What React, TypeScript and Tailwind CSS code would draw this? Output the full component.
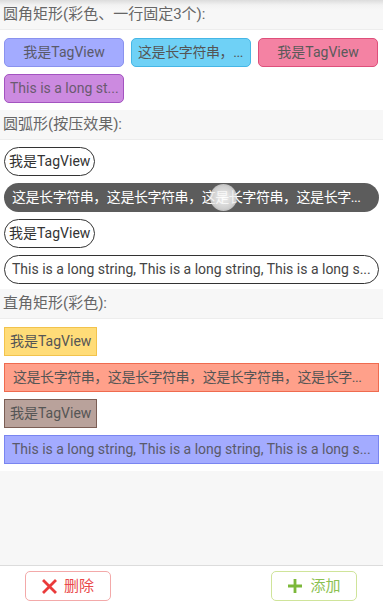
import React from "react";

const font = { fontFamily: 'Roboto, "Noto Sans CJK SC", sans-serif' };

function Header({ text, top }: { text: string; top?: boolean }) {
  return (
    <div
      className={
        "h-[30px] flex items-center px-[3px] text-[15px] text-[#666] border-b border-[#ededed] " +
        (top
          ? "bg-[linear-gradient(to_bottom,#dcdcdc_0px,#f2f2f2_5px,#f7f7f7_10px)]"
          : "bg-[#f7f7f7]")
      }
    >
      {text}
    </div>
  );
}

export default function App() {
  return (
    <div className="w-[383px] h-[606px] flex flex-col bg-[#f7f7f7] overflow-hidden" style={font}>
      <Header text="圆角矩形(彩色、一行固定3个):" top />
      <div className="bg-white pt-[8px] pb-[7px] px-[4px]">
        <div className="grid grid-cols-[120px_120px_120px] gap-[7px]">
          <div className="h-[29px] rounded-[5px] bg-[#a3abff] border border-[#8a92ee] flex items-center justify-center text-[14px] text-[#5a5a6a]">
            我是TagView
          </div>
          <div className="h-[29px] rounded-[5px] bg-[#6fd1f6] border border-[#45b6e6] flex items-center pl-[6px] text-[14px] tracking-[-0.4px] text-[#555] whitespace-nowrap overflow-hidden">
            这是长字符串，...
          </div>
          <div className="h-[29px] rounded-[5px] bg-[#f482a3] border border-[#de4f7b] flex items-center justify-center text-[14px] text-[#5a5a5a]">
            我是TagView
          </div>
          <div className="h-[29px] rounded-[5px] bg-[#cc8ae0] border border-[#a353c0] flex items-center px-[5px] text-[14px] text-[#6a5a70] whitespace-nowrap overflow-hidden">
            This is a long st...
          </div>
        </div>
      </div>
      <Header text="圆弧形(按压效果):" />
      <div className="bg-white pt-[7px] pb-[5px] px-[4px] flex flex-col gap-[7px]">
        <div className="self-start h-[29px] rounded-full border border-[#333] flex items-center px-[4px] text-[14px] text-[#333]">
          我是TagView
        </div>
        <div className="relative h-[29px] rounded-full bg-[#5c5c5c] flex items-center px-[8px] text-[14px] tracking-[-0.45px] text-white whitespace-nowrap overflow-hidden">
          这是长字符串，这是长字符串，这是长字符串，这是长字...
          <div className="absolute left-[206px] top-[1px] w-[27px] h-[27px] rounded-full bg-[radial-gradient(circle,rgba(255,255,255,0.9)_0%,rgba(235,235,235,0.8)_60%,rgba(255,255,255,0.3)_100%)]" />
        </div>
        <div className="self-start h-[29px] rounded-full border border-[#333] flex items-center px-[4px] text-[14px] text-[#333]">
          我是TagView
        </div>
        <div className="h-[29px] rounded-full border border-[#333] flex items-center px-[7px] text-[14px] text-[#444] whitespace-nowrap overflow-hidden">
          This is a long string, This is a long string, This is a long s...
        </div>
      </div>
      <Header text="直角矩形(彩色):" />
      <div className="bg-white pt-[8px] pb-[7px] px-[4px] flex flex-col gap-[7px]">
        <div className="self-start h-[29px] bg-[#ffdc78] border border-[#f2c34c] flex items-center px-[5px] text-[14px] text-[#555]">
          我是TagView
        </div>
        <div className="h-[29px] bg-[#ffa08a] border border-[#ef6b4f] flex items-center px-[8px] text-[14px] tracking-[-0.45px] text-[#555] whitespace-nowrap overflow-hidden">
          这是长字符串，这是长字符串，这是长字符串，这是长字...
        </div>
        <div className="self-start h-[29px] bg-[#b9a29b] border border-[#7b5e55] flex items-center px-[5px] text-[14px] text-[#555]">
          我是TagView
        </div>
        <div className="h-[29px] bg-[#a3abff] border border-[#7985f0] flex items-center px-[7px] text-[14px] text-[#5a5a6a] whitespace-nowrap overflow-hidden">
          This is a long string, This is a long string, This is a long s...
        </div>
      </div>
      <div className="flex-1 bg-[#f7f7f7]" />
      <div className="h-[41px] bg-white border-t border-[#dcdcdc] flex items-center justify-between pl-[25px] pr-[26px]">
        <div className="w-[86px] h-[30px] rounded-[5px] border border-[#f3a9a9] flex items-center justify-center gap-[7px] text-[15px] text-[#ea4a4a]">
          <svg width="15" height="15" viewBox="0 0 15 15">
            <path d="M2 2 L13 13 M13 2 L2 13" stroke="#ea3b3b" strokeWidth="2.8" strokeLinecap="square" />
          </svg>
          <span>删除</span>
        </div>
        <div className="w-[86px] h-[30px] rounded-[5px] border border-[#cfe49a] flex items-center justify-center gap-[7px] text-[15px] text-[#8cc152]">
          <svg width="16" height="16" viewBox="0 0 16 16">
            <path d="M8 1 V15 M1 8 H15" stroke="#7cb83a" strokeWidth="2.8" />
          </svg>
          <span>添加</span>
        </div>
      </div>
    </div>
  );
}
